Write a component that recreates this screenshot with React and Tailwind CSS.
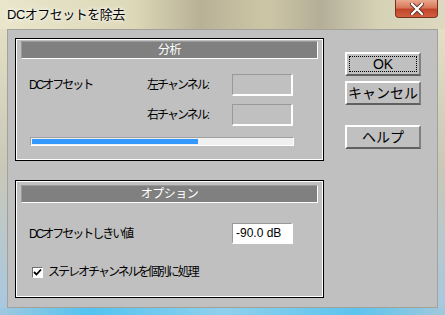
import React from "react";

const jp = "font-['Liberation_Sans','Noto_Sans_CJK_JP',sans-serif]";
const label = "text-[12px] text-black tracking-[-2px] whitespace-nowrap";

function Group({ title, height, headerTop, children }) {
  return (
    <div className="border border-black" style={{ height }}>
      <div className="h-full border border-white flex flex-col">
        <div
          className="ml-[4px] w-[297px] h-[18px] bg-[#808080] border-t border-l border-t-[#9a9a9a] border-l-[#9a9a9a] border-b border-r border-b-white border-r-white flex items-center justify-center text-white text-[12px] tracking-[-0.5px]"
          style={{ marginTop: headerTop }}
        >
          {title}
        </div>
        {children}
      </div>
    </div>
  );
}

function SunkenBox({ children, className = "" }) {
  return (
    <div
      className={
        "w-[61px] border-t border-l border-t-[#999999] border-l-[#999999] border-b-2 border-r-2 border-b-white border-r-white " +
        className
      }
    >
      {children}
    </div>
  );
}

function Button({ label, focused }) {
  return (
    <div className="w-[76px] h-[24px] bg-[#c0c0c0] border-t-2 border-l-2 border-t-white border-l-white border-b-2 border-r-2 border-b-[#606060] border-r-[#808080] p-[2px]">
      <div
        className={
          "h-full flex items-center justify-center text-[14px] text-black whitespace-nowrap " +
          (focused ? "border border-dotted border-black" : "")
        }
      >
        {label}
      </div>
    </div>
  );
}

export default function App() {
  return (
    <div
      className={`w-[445px] h-[315px] flex flex-col overflow-hidden ${jp} bg-[linear-gradient(90deg,#e9e6cc_0%,#ddd8b8_30%,#b9b196_45%,#cdc6a6_60%,#b4ae98_72%,#d6d2b6_85%,#dcd9c0_100%)]`}
    >
      {/* title bar */}
      <div className="h-[29px] flex items-start justify-between">
        <div className="pl-[7px] pt-[5px] text-[13px] text-black tracking-[-0.5px] [text-shadow:0_0_6px_#ffffff,0_0_3px_#ffffff]">
          DCオフセットを除去
        </div>
        <div className="mr-[7px] w-[43px] h-[18px] rounded-b-[4px] border border-t-0 border-[#7a3020] bg-[linear-gradient(180deg,#e9a88f_0%,#d8775a_45%,#c2452a_55%,#d0603f_100%)] flex items-center justify-center">
          <svg width="14" height="12" viewBox="0 0 14 12">
            <path d="M2 1 L12 11 M12 1 L2 11" stroke="#5a2a20" strokeWidth="4" strokeLinecap="round" />
            <path d="M2 1 L12 11 M12 1 L2 11" stroke="#ffffff" strokeWidth="2.4" strokeLinecap="round" />
          </svg>
        </div>
      </div>

      {/* client area */}
      <div className="flex-1 flex bg-[linear-gradient(180deg,#e3dfc4_0%,#c9c8b8_50%,#a8c8e0_100%)] px-[7px]">
        <div className="flex-1 flex bg-[#c0c0c0] border border-[#a2a29a] pl-[7px] pt-[8px]">
          <div className="w-[309px] flex flex-col">
            <Group title="分析" height={123} headerTop={1}>
              <div className={`mt-[15px] pl-[12px] flex items-center h-[22px] ${label}`}>
                <div className="w-[118px]">DCオフセット</div>
                <div className="w-[85px]">左チャンネル:</div>
                <SunkenBox className="h-[22px]" />
              </div>
              <div className={`mt-[8px] pl-[12px] flex items-center h-[22px] ${label}`}>
                <div className="w-[118px]" />
                <div className="w-[85px]">右チャンネル:</div>
                <SunkenBox className="h-[22px]" />
              </div>
              <div className="mt-[11px] ml-[13px] w-[264px] h-[9px] bg-[#f0f0f0] border-t border-l border-t-[#a0a0a0] border-l-[#a0a0a0] border-b border-r border-b-white border-r-white p-[1px]">
                <div className="w-[166px] h-full bg-[#3399ff]" />
              </div>
            </Group>

            <div className="mt-[19px]">
              <Group title="オプション" height={118} headerTop={3}>
                <div className={`mt-[20px] pl-[12px] flex items-center h-[21px] ${label}`}>
                  <div className="w-[203px]">DCオフセットしきい値</div>
                  <SunkenBox className="h-[21px] bg-white flex items-center pl-[3px] font-['Liberation_Sans',sans-serif] text-[12px] tracking-normal">
                    -90.0 dB
                  </SunkenBox>
                </div>
                <div className={`mt-[19px] pl-[15px] flex items-center ${label}`}>
                  <div className="w-[11px] h-[11px] bg-white border-t border-l border-t-[#707070] border-l-[#707070] border-b border-r border-b-white border-r-white flex items-center justify-center">
                    <svg width="9" height="9" viewBox="0 0 9 9">
                      <path d="M1 4 L3.5 6.5 L8 1.5" stroke="#000" strokeWidth="1.8" fill="none" />
                    </svg>
                  </div>
                  <div className="ml-[5px]">ステレオチャンネルを個別に処理</div>
                </div>
              </Group>
            </div>
          </div>

          <div className="ml-[21px] pt-[14px] flex flex-col">
            <Button label="OK" focused />
            <div className="mt-[5px]">
              <Button label="キャンセル" />
            </div>
            <div className="mt-[20px]">
              <Button label="ヘルプ" />
            </div>
          </div>
        </div>
      </div>

      {/* bottom frame */}
      <div className="h-[7px] bg-[linear-gradient(90deg,#9fc8e0_0%,#52c3f0_20%,#8fd0ec_50%,#5cc4ee_80%,#a0c8dc_100%)]" />
    </div>
  );
}
